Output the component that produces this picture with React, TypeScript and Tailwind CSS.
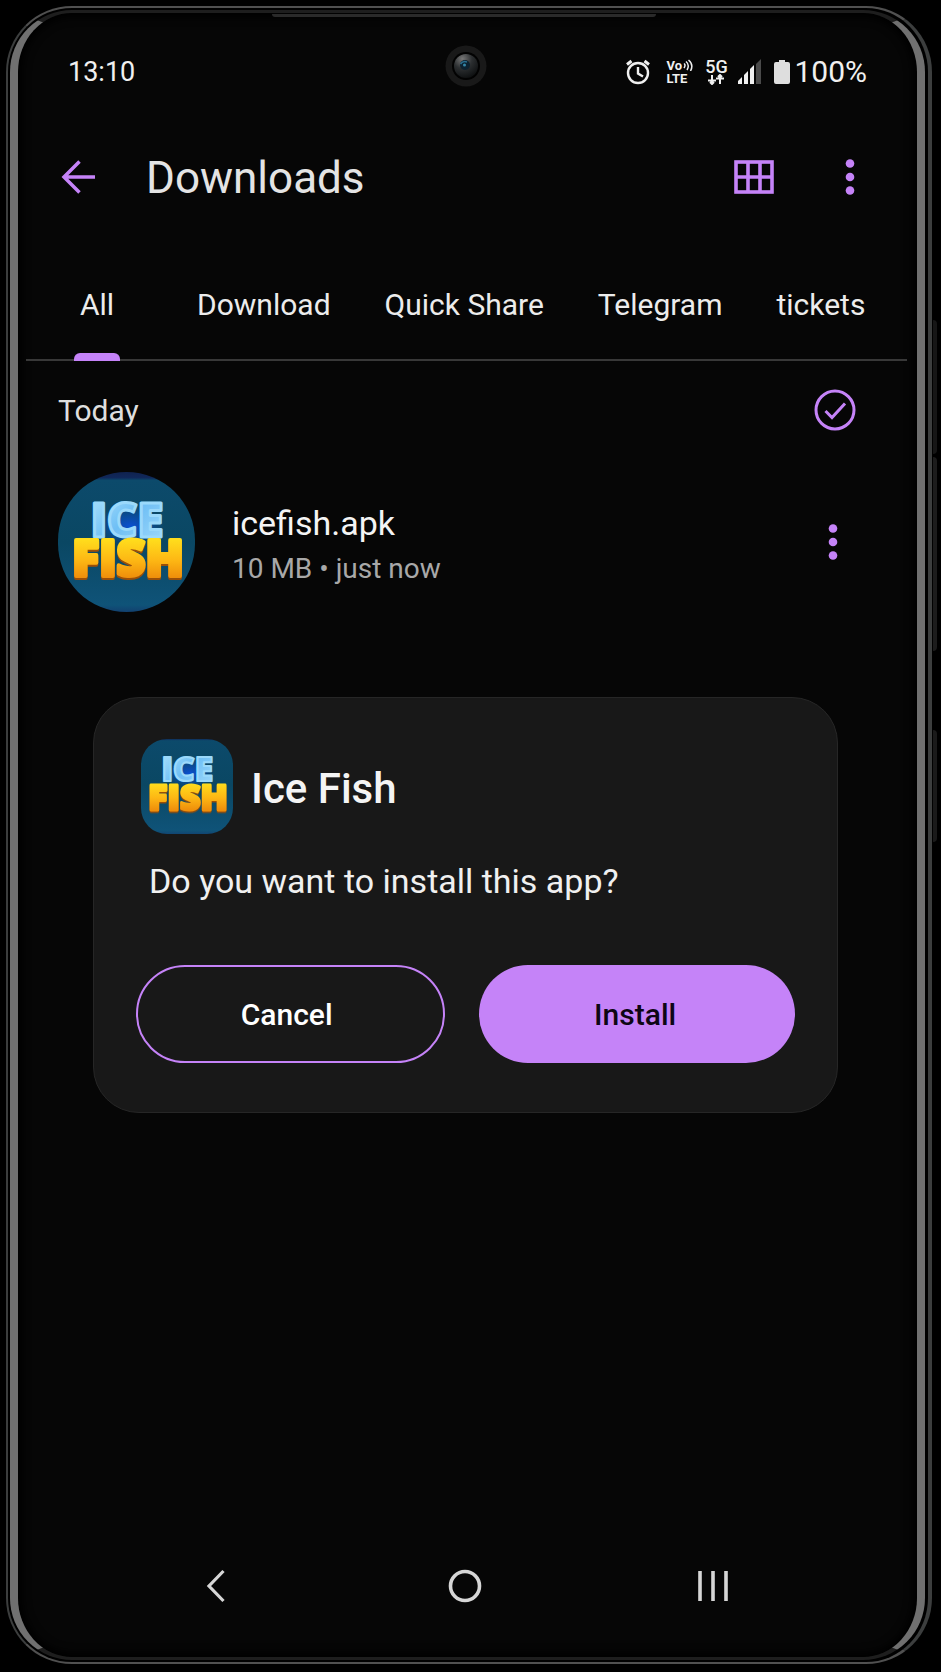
import React, { useState } from 'react';

interface FileItem {
  name: string;
  size: string;
  time: string;
}

const TABS = ['All', 'Download', 'Quick Share', 'Telegram', 'tickets'];

const FILES: FileItem[] = [{ name: 'icefish.apk', size: '10 MB', time: 'just now' }];

// Game logo, reused for the file row and the install dialog
function IceFishLogo({ id, viewBox, className }: { id: string; viewBox: string; className: string }) {
  return (
    <svg viewBox={viewBox} preserveAspectRatio="none" className={className} role="img" aria-label="Ice Fish logo">
      <defs>
        <linearGradient id={`${id}-bg`} x1="0" y1="0" x2="0" y2="1">
          <stop offset="0" stopColor="#10224f" />
          <stop offset="0.04" stopColor="#10285a" />
          <stop offset="0.06" stopColor="#0c4a6b" />
          <stop offset="0.5" stopColor="#0a4763" />
          <stop offset="0.95" stopColor="#0f5378" />
          <stop offset="1" stopColor="#12406f" />
        </linearGradient>
        <linearGradient id={`${id}-ice`} x1="0" y1="0" x2="1" y2="1">
          <stop offset="0" stopColor="#b4e8fd" />
          <stop offset="0.5" stopColor="#6fbff5" />
          <stop offset="1" stopColor="#a5dcfb" />
        </linearGradient>
        <linearGradient id={`${id}-fish`} x1="0" y1="0" x2="0" y2="1">
          <stop offset="0.25" stopColor="#ffdc1c" />
          <stop offset="0.55" stopColor="#fdb714" />
          <stop offset="0.8" stopColor="#ef8f0b" />
        </linearGradient>
        <radialGradient id={`${id}-glow`}>
          <stop offset="0" stopColor="#0a4fd0" />
          <stop offset="1" stopColor="#0a4fd0" stopOpacity="0" />
        </radialGradient>
      </defs>
      <rect width="137" height="140" fill={`url(#${id}-bg)`} />
      <ellipse cx="72" cy="54" rx="34" ry="20" fill={`url(#${id}-glow)`} />
      <g fontFamily="'Open Sans', sans-serif" fontWeight="800" textAnchor="middle" strokeLinejoin="round">
        <text x="69" y="65" fontSize="47" fill={`url(#${id}-ice)`} stroke="#9bd9fb" strokeWidth="3">ICE</text>
        <text
          x="70"
          y="104"
          fontSize="50"
          fill={`url(#${id}-fish)`}
          stroke={`url(#${id}-fish)`}
          strokeWidth="4"
          className="drop-shadow-[0_2px_0_#9a4f08]"
        >
          FISH
        </text>
      </g>
    </svg>
  );
}

function MoreDots() {
  return (
    <svg viewBox="0 0 10 36" className="w-[10px] h-9" fill="#c583f8" aria-hidden="true">
      <circle cx="5" cy="4.5" r="4.3" />
      <circle cx="5" cy="18" r="4.3" />
      <circle cx="5" cy="31.5" r="4.3" />
    </svg>
  );
}

function StatusBar() {
  return (
    <div className="grid grid-cols-[1fr_auto_1fr] items-center h-10 pl-[46px] pr-[50px] text-[#f0f0f0]">
      <span className="pl-1 text-[27px] leading-10">13:10</span>

      {/* Front camera */}
      <svg viewBox="0 0 42 42" className="w-[42px] h-[42px] -mt-3" aria-hidden="true">
        <defs>
          <radialGradient id="lens" cx="0.35" cy="0.2" r="0.8">
            <stop offset="0" stopColor="#777" />
            <stop offset="0.5" stopColor="#2c2f31" />
            <stop offset="1" stopColor="#101213" />
          </radialGradient>
        </defs>
        <circle cx="21" cy="21" r="20.5" fill="#191919" />
        <circle cx="21" cy="21" r="14" fill="#020202" />
        <circle cx="21" cy="21" r="12" fill="url(#lens)" />
        <circle cx="20" cy="20" r="5" fill="#0d2230" />
        <path d="M15.5 19Q18 15.5 22 17" stroke="#2a6f90" strokeWidth="1.5" fill="none" />
        <circle cx="19.5" cy="20" r="1.5" fill="#3587a8" />
      </svg>

      <div className="flex items-center justify-end">
        <svg viewBox="0 0 24 26" className="w-6 h-[26px] mr-4" fill="none" stroke="currentColor" strokeWidth="2.4" aria-hidden="true">
          <circle cx="12" cy="14" r="10" />
          <path d="M12 8v6.5l5 3" />
          <path d="M1 5.5 5.5 2M23 5.5 18.5 2" strokeWidth="3" />
        </svg>
        <span className="relative flex flex-col w-7 mr-[10px] text-[13px] leading-[13px] font-bold">
          <span>Vo</span>
          <span>LTE</span>
          <svg viewBox="0 0 10 12" className="absolute left-[17px] top-0 w-[10px] h-3" fill="none" stroke="currentColor" strokeWidth="1.5" aria-hidden="true">
            <path d="M1 4.5Q3 6 1 9M3 2.5Q7 6 4 11M5.5 1Q11 5.5 7.5 12" />
          </svg>
        </span>
        <span className="flex flex-col items-center w-6 mr-[10px] text-[18px] leading-[15px] font-medium">
          <span>5G</span>
          <svg viewBox="0 0 18 11" className="w-[18px] h-[11px]" fill="none" stroke="currentColor" strokeWidth="2" aria-hidden="true">
            <path d="M5 1v9M1 6.5h8M3 8l2 2 2-2M13 1v9M9 4.5h8M11 3l2-2 2 2" />
          </svg>
        </span>
        <svg viewBox="0 0 24 26" className="w-6 h-[26px] mr-3" fill="currentColor" aria-hidden="true">
          <path d="M0 25v-3l4-4v7zM6 25V16l4-4v13zM12 25V10l4-4v19z" />
          <path d="M18 25V5l5-5v25z" fill="#4a4a4a" />
        </svg>
        <svg viewBox="0 0 16 26" className="w-4 h-[26px] mr-1" fill="#dedede" aria-hidden="true">
          <path d="M5 3V1h6v2h3q2 0 2 2v18q0 2-2 2H2q-2 0-2-2V5q0-2 2-2z" />
        </svg>
        <span className="text-[30px] leading-10">100%</span>
      </div>
    </div>
  );
}

export default function App() {
  const [activeTab, setActiveTab] = useState('All');
  const [dialogOpen, setDialogOpen] = useState(true);

  return (
    <div className="min-h-screen flex bg-black pt-[6px] pb-2 pl-[6px] pr-[9px] font-['Roboto','Noto_Sans',sans-serif]">
      {/* Phone body */}
      <div className="relative flex-1 flex rounded-[66px] border-2 border-r-4 border-x-[#3c3e3e] border-y-[#505050] bg-black p-[2px] pr-[3px]">
        {/* Side keys */}
        <span className="absolute -right-[9px] top-[312px] w-1 h-[134px] rounded-r bg-[#161616]" />
        <span className="absolute -right-[9px] top-[449px] w-1 h-[194px] rounded-r bg-[#1c1c1c]" />
        <span className="absolute -right-[9px] top-[722px] w-1 h-[112px] rounded-r bg-[#1a1a1a]" />
        <span className="absolute left-[264px] right-[272px] top-[6px] h-[3px] rounded-b bg-[#2a2a2a]" />

        <div className="flex-1 flex flex-col rounded-[62px] border-x-8 border-y-[3px] border-x-[#707070] border-y-[#1e1e1e] bg-[#060606] pt-[39px] pb-[46px] shadow-[inset_0_0_8px_4px_#000]">
          <StatusBar />

          {/* Title bar */}
          <header className="flex items-center h-[70px] mt-[50px] pl-[43px] pr-[62px]">
            <button type="button" aria-label="Back">
              <svg viewBox="0 0 34 34" className="w-[34px] h-[34px]" fill="none" stroke="#c583f8" strokeWidth="3.5" aria-hidden="true">
                <path d="M34 17H3M18.5 1.5 3 17l15.5 15.5" />
              </svg>
            </button>
            <h1 className="flex-1 pt-[2px] pl-[51px] text-[44px] leading-[52px] text-[#e4e4e4]">Downloads</h1>
            <button type="button" aria-label="Grid view" className="mr-[71px]">
              <svg viewBox="0 0 40 34" className="w-10 h-[34px]" fill="none" stroke="#c583f8" strokeWidth="3.6" aria-hidden="true">
                <rect x="2" y="2" width="36" height="30" />
                <path d="M14 2v30M26 2v30M2 17h36" />
              </svg>
            </button>
            <button type="button" aria-label="More options">
              <MoreDots />
            </button>
          </header>

          {/* Folder tabs */}
          <nav className="flex h-[90px] mt-[59px] ml-2 mr-[10px] pl-[48px] border-b-2 border-[#383838] text-[30px] leading-10 text-[#ececec]">
            {TABS.map((tab) => (
              <button
                key={tab}
                type="button"
                onClick={() => setActiveTab(tab)}
                className="relative pb-[21px] mr-[54px] first:mr-[77px] last:mr-0 first:w-[46px] whitespace-nowrap"
              >
                {tab}
                {tab === activeTab && (
                  <span className="absolute -bottom-[2px] left-0 right-0 h-2 rounded-t-md bg-[#c583f8]" />
                )}
              </button>
            ))}
          </nav>

          {/* File list */}
          <main className="flex-1">
            <div className="flex items-center justify-between mt-[27px] pl-10 pr-[61px]">
              <h2 className="pt-[3px] text-[30px] leading-10 text-[#dedede]">Today</h2>
              <button type="button" aria-label="Select all">
                <svg viewBox="0 0 42 42" className="w-[42px] h-[42px]" fill="none" stroke="#c583f8" strokeWidth="3" aria-hidden="true">
                  <circle cx="21" cy="21" r="19" />
                  <path d="m11.5 22 6.5 6.5L31 14.5" />
                </svg>
              </button>
            </div>

            {FILES.map((file) => (
              <div key={file.name} className="flex items-center mt-[41px] pl-10 pr-[79px]">
                <IceFishLogo id="row" viewBox="0 0 137 140" className="w-[137px] h-[140px] rounded-full" />
                <div className="flex-1 pt-2 pl-[37px]">
                  <p className="text-[34px] leading-[46px] text-[#f4f4f4]">{file.name}</p>
                  <p className="text-[28px] leading-[46px] text-[#a8a8a8]">{file.size} • {file.time}</p>
                </div>
                <button type="button" aria-label={`Options for ${file.name}`}>
                  <MoreDots />
                </button>
              </div>
            ))}

            {dialogOpen && (
              <div
                role="dialog"
                aria-labelledby="install-title"
                className="mt-[85px] ml-[75px] mr-[79px] pt-[41px] pb-[49px] px-[42px] rounded-[46px] border border-[#262626] bg-[#181818]"
              >
                <div className="flex items-center pl-[5px]">
                  <IceFishLogo id="dialog" viewBox="4 6 129 132" className="w-[92px] h-[95px] rounded-[26px]" />
                  <h3 id="install-title" className="pt-1 pl-[18px] text-[42px] leading-[50px] font-medium text-[#f4f4f4]">Ice Fish</h3>
                </div>
                <p className="mt-[25px] pl-[13px] text-[34px] leading-11 text-[#f0f0f0]">Do you want to install this app?</p>
                <div className="grid grid-cols-[49fr_50fr] gap-[34px] mt-[62px]">
                  <button
                    type="button"
                    onClick={() => setDialogOpen(false)}
                    className="h-[98px] pr-2 rounded-full border-2 border-[#c583f8] text-[30px] font-medium text-white"
                  >
                    Cancel
                  </button>
                  <button
                    type="button"
                    onClick={() => setDialogOpen(false)}
                    className="h-[98px] pr-1 rounded-full bg-[#c583f8] text-[30px] font-medium text-[#0e0614]"
                  >
                    Install
                  </button>
                </div>
              </div>
            )}
          </main>

          {/* System navigation */}
          <nav className="flex items-center justify-between h-[50px] pl-[181px] pr-[187px] text-[#d6d6d6]">
            <button type="button" aria-label="Back" className="w-[34px] flex justify-center">
              <svg viewBox="0 0 20 34" className="w-5 h-[34px]" fill="none" stroke="currentColor" strokeWidth="3.2" aria-hidden="true">
                <path d="M17.5 2 3 17l14.5 15" />
              </svg>
            </button>
            <button type="button" aria-label="Home" className="w-[34px] flex justify-center">
              <svg viewBox="0 0 34 34" className="w-[34px] h-[34px]" fill="none" stroke="currentColor" strokeWidth="3.6" aria-hidden="true">
                <circle cx="17" cy="17" r="14.5" />
              </svg>
            </button>
            <button type="button" aria-label="Recent apps" className="w-[34px] flex justify-center">
              <svg viewBox="0 0 32 32" className="w-8 h-8" fill="none" stroke="currentColor" strokeWidth="3.6" aria-hidden="true">
                <path d="M3 1v30M16 1v30M29 1v30" />
              </svg>
            </button>
          </nav>
        </div>
      </div>
    </div>
  );
}
